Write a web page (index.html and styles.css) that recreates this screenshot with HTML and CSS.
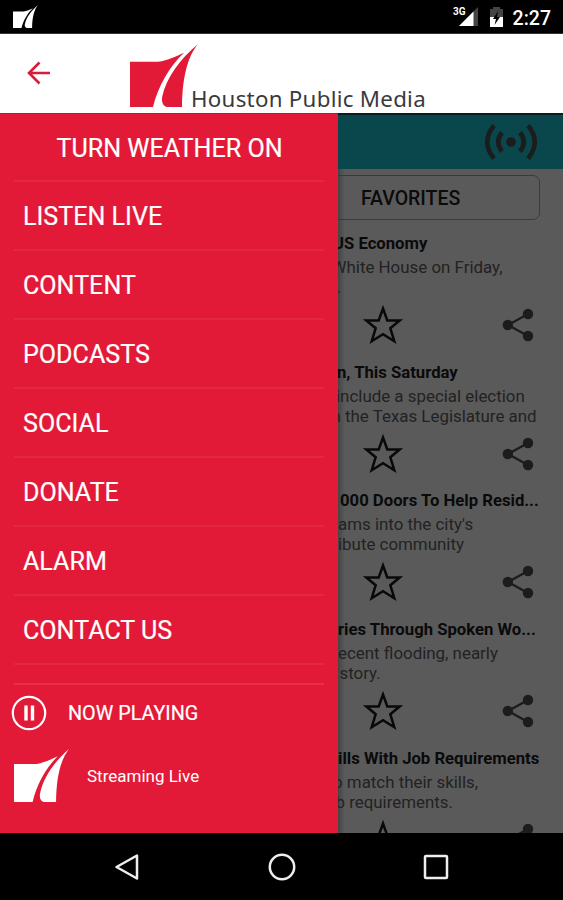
FILE: index.html
```html
<!DOCTYPE html>
<html lang="en">
<head>
<meta charset="utf-8">
<title>Houston Public Media</title>
<link rel="stylesheet" href="styles.css">
</head>
<body>
<svg width="0" height="0" class="defs">
  <symbol id="logo" viewBox="391 134 204 188" preserveAspectRatio="none">
    <path d="M391 187H475C505 183 530 170 553 160C510 200 475 260 460 322H391Z"/>
    <path d="M595 134C565 170 548 230 547 322H503C487 320 485 300 488 290C500 235 540 180 595 134Z"/>
  </symbol>
  <symbol id="star" viewBox="0 0 44 44"><path d="M22 5.500L26.300 17.500H38.700L29.300 25.200L33.300 38.200L22 31.200L10.700 38.200L14.700 25.200L5.300 17.500H17.700Z" fill="none" stroke="#090909" stroke-width="2.500"/></symbol>
  <symbol id="share" viewBox="0 0 32 34"><path d="M26 6L6 17L26 28" fill="none" stroke="#1c1c1c" stroke-width="2.400"/><g fill="#1c1c1c"><circle cx="26" cy="6" r="5.200"/><circle cx="5.800" cy="17" r="5.200"/><circle cx="26" cy="28" r="5.200"/></g></symbol>
</svg>
<div class="status">
  <svg class="status-logo"><use href="#logo"/></svg>
  <div class="status-right">
    <span class="net">3G</span>
    <svg width="21" height="21" viewBox="0 0 21 21"><path d="M20 1V20H1Z" fill="#444"/><path d="M15.500 5.500V20H1Z" fill="#fff"/></svg>
    <svg class="battery" width="15" height="22" viewBox="0 0 15 22"><path d="M1 3H4V1H11V3H14V11H1Z" fill="#444"/><path d="M1 11H14V21H1Z" fill="#fff"/><path d="M9 5L4 13H7L5.500 19L11 11H8Z" fill="#000"/></svg>
    <span class="clock">2:27</span>
  </div>
</div>
<header class="header">
  <svg class="back" width="24" height="24" viewBox="0 0 24 24"><path d="M23 12H2M12.500 1.500L2 12L12.500 22.500" fill="none" stroke="#db1b38" stroke-width="2.600"/></svg>
  <svg class="brand-logo"><use href="#logo"/></svg>
  <span class="brand">Houston Public Media</span>
</header>
<main class="main">
  <nav class="drawer">
    <ul class="menu">
      <li class="weather">TURN WEATHER ON</li>
      <li>LISTEN LIVE</li>
      <li>CONTENT</li>
      <li>PODCASTS</li>
      <li>SOCIAL</li>
      <li>DONATE</li>
      <li>ALARM</li>
      <li>CONTACT US</li>
    </ul>
    <div class="player">
      <div class="now">
        <svg width="36" height="36" viewBox="0 0 36 36"><circle cx="18" cy="18" r="16.200" fill="none" stroke="#fff" stroke-width="2.200"/><path d="M15 10.500V25.500M21.500 10.500V25.500" stroke="#fff" stroke-width="3.400"/></svg>
        <span>NOW PLAYING</span>
      </div>
      <div class="stream">
        <svg class="stream-logo"><use href="#logo"/></svg>
        <span>Streaming Live</span>
      </div>
    </div>
  </nav>
  <section class="content">
    <div class="toolbar">
      <svg width="54" height="38" viewBox="0 0 54 38" fill="none" stroke="#1c1c1c" stroke-width="4.600"><circle cx="27" cy="19" r="4.800" fill="#1c1c1c" stroke="none"/><path d="M18 9.500Q10.500 19 18 28.500M36 9.500Q43.500 19 36 28.500M10 2.500Q-3.500 19 10 35.500M44 2.500Q57.500 19 44 35.500"/></svg>
    </div>
    <div class="tab">FAVORITES</div>
    <div class="list">
      <article class="item a1">
        <h2>US Economy</h2><p class="l1">White House on Friday,</p><p class="l2">.</p>
        <div class="actions"><svg class="star"><use href="#star"/></svg><svg class="share"><use href="#share"/></svg></div>
      </article>
      <article class="item a2">
        <h2>n, This Saturday</h2><p class="l1">include a special election</p><p class="l2">n the Texas Legislature and</p>
        <div class="actions"><svg class="star"><use href="#star"/></svg><svg class="share"><use href="#share"/></svg></div>
      </article>
      <article class="item a3">
        <h2>000 Doors To Help Resid...</h2><p class="l1">ams into the city's</p><p class="l2">ibute community</p>
        <div class="actions"><svg class="star"><use href="#star"/></svg><svg class="share"><use href="#share"/></svg></div>
      </article>
      <article class="item a4">
        <h2>ries Through Spoken Wo...</h2><p class="l1">ecent flooding, nearly</p><p class="l2">story.</p>
        <div class="actions"><svg class="star"><use href="#star"/></svg><svg class="share"><use href="#share"/></svg></div>
      </article>
      <article class="item a5">
        <h2>ills With Job Requirements</h2><p class="l1">o match their skills,</p><p class="l2">b requirements.</p>
        <div class="actions"><svg class="star"><use href="#star"/></svg><svg class="share"><use href="#share"/></svg></div>
      </article>
    </div>
  </section>
</main>
<footer class="navbar">
  <svg width="28" height="28" viewBox="0 0 28 28"><path d="M24 2.500V25.500L3.500 14Z"/></svg>
  <svg width="28" height="28" viewBox="0 0 28 28"><circle cx="14" cy="14" r="12.200"/></svg>
  <svg width="28" height="28" viewBox="0 0 28 28"><rect x="3" y="3" width="22" height="22" rx="1"/></svg>
</footer>
</body>
</html>
```
FILE: styles.css
```css
* { box-sizing: border-box; margin: 0; padding: 0; }
body {
  width: 563px;
  height: 900px;
  overflow: hidden;
  display: flex;
  flex-direction: column;
  background: #000;
  font-family: Roboto, "Liberation Sans", sans-serif;
}
svg { display: block; flex: none; }
.defs { display: none; }

.status {
  height: 34px;
  flex: none;
  display: flex;
  justify-content: space-between;
  align-items: center;
  padding: 0 12px 0 13px;
  color: #fff;
  border-bottom: 1px solid #333;
}
.status-logo { width: 25px; height: 23px; fill: #fff; }
.status-right { display: flex; align-items: center; }
.net { font-size: 10px; font-weight: 700; margin: -10px -8px 0 0; z-index: 1; }
.battery { margin: 0 9px 0 10px; }
.clock { font-size: 19.500px; font-weight: 500; line-height: 34px; margin-top: 4px; }

.header {
  height: 79px;
  flex: none;
  display: flex;
  background: #fff;
  padding-left: 27px;
}
.back { margin-top: 27px; }
.brand-logo { width: 68px; height: 63px; margin: 10px 0 0 79px; fill: #e31a37; }
.brand {
  font-family: "Noto Sans", sans-serif;
  font-size: 22.300px;
  letter-spacing: 0.280px;
  line-height: 30px;
  margin: 50px 0 0 -7px;
  color: #3a3a3c;
  white-space: nowrap;
}

.main { height: 720px; flex: none; display: flex; overflow: hidden; }
.drawer { width: 338px; flex: none; background: #e31a37; color: #fff; border-top: 1px solid #d0101f; }
.menu { list-style: none; margin: 0 14px; }
.menu li {
  height: 69px;
  line-height: 70px;
  padding-left: 9px;
  font-size: 25.100px;
  -webkit-text-stroke: 0.200px #fff;
  border-bottom: 2px solid #e52841;
  white-space: nowrap;
}
.menu .weather { text-align: center; padding: 0 0 0 1px; height: 68px; line-height: 69px; }
.player { margin: 18px 14px 0; border-top: 2px solid #e6314b; }
.now { display: flex; align-items: center; height: 36px; margin: 10px 0 0 -3px; font-size: 19.800px; -webkit-text-stroke: 0.200px #fff; }
.now span { margin-left: 21px; }
.stream { display: flex; margin-top: 18px; font-size: 17px; }
.stream-logo { width: 55px; height: 53px; fill: #fff; }
.stream span { margin: 17px 0 0 18px; line-height: 20px; }

.content {
  width: 225px;
  overflow: hidden;
  background: linear-gradient(90deg, #454545, #5a5a5a 7px);
}
.toolbar {
  height: 56px;
  background: #09474d;
  border-top: 2px solid #0a1d20;
  display: flex;
  justify-content: flex-end;
  align-items: center;
  padding-right: 25px;
}
.tab {
  height: 45px;
  width: 212px;
  margin: 6px 0 0 -10px;
  border: 1.500px solid #363d3d;
  border-radius: 7px;
  line-height: 45px;
  padding-left: 32px;
  font-size: 19.500px;
  color: #0b0b0b;
  font-weight: 500;
}
.list { margin-top: 14px; }
.item { height: 128.700px; color: #222; font-size: 16.900px; white-space: nowrap; }
.item h2 { height: 23px; line-height: 20px; font-size: 16.700px; font-weight: 700; color: #0a0a0a; }
.item p { height: 20px; line-height: 21px; }
.actions { display: flex; align-items: center; justify-content: space-between; height: 44px; margin-top: 6px; padding: 0 29px 0 23px; }
.star { width: 44px; height: 44px; }
.share { width: 32px; height: 34px; }

/* Lines that run on beneath the open drawer */
.a1 h2 { margin-left: -5px; }
.a1 .l1 { margin-left: -6.500px; }
.a1 .l2 { margin-left: -1px; }
.a2 h2 { margin-left: -1px; }
.a2 .l1 { margin-left: -2px; }
.a2 .l2 { margin-left: -6.500px; }
.a3 h2 { margin-left: 2px; }
.a4 .l2 { margin-left: 1.500px; }
.a5 .l1 { margin-left: -5px; }
.a5 .l2 { margin-left: -2.500px; }

.navbar { flex: 1; display: flex; justify-content: space-between; align-items: center; padding: 0 113px; }
.navbar svg { fill: none; stroke: #eee; stroke-width: 2.500; stroke-linejoin: round; }
```
